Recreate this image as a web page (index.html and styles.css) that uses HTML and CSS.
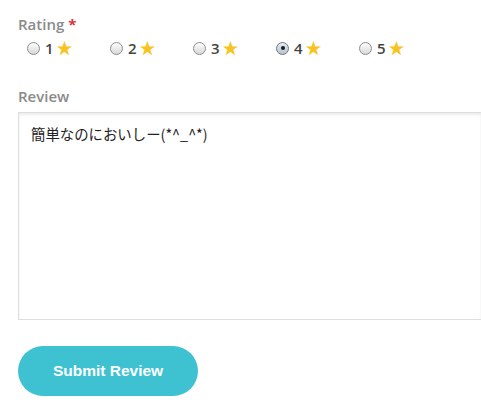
FILE: index.html
```html
<!DOCTYPE html>
<html>
<head>
<meta charset="utf-8">
<link rel="stylesheet" href="styles.css">
</head>
<body>
<form class="review-form">
  <div class="field">
    <div class="label">Rating <span class="req">*</span></div>
    <div class="ratings">
      <label class="rate"><span class="radio"></span><span class="num">1</span><span class="star">★</span></label>
      <label class="rate"><span class="radio"></span><span class="num">2</span><span class="star">★</span></label>
      <label class="rate"><span class="radio"></span><span class="num">3</span><span class="star">★</span></label>
      <label class="rate"><span class="radio checked"></span><span class="num">4</span><span class="star">★</span></label>
      <label class="rate"><span class="radio"></span><span class="num">5</span><span class="star">★</span></label>
    </div>
  </div>
  <div class="field review">
    <div class="label">Review</div>
    <div class="textarea">簡単なのにおいしー(*^_^*)</div>
  </div>
  <button type="button" class="submit">Submit Review</button>
</form>
</body>
</html>
```
FILE: styles.css
```css
html, body { margin: 0; padding: 0; background: #fff; }
body { font-family: "Open Sans", "Noto Sans CJK JP", sans-serif; overflow: hidden; }
.review-form { padding: 14px 0 0 18px; }
.label { font-size: 15px; color: #8a8a8a; line-height: 20px; font-weight: 600; }
.req { color: #d9343a; font-weight: 700; }
.ratings { display: flex; padding-left: 9px; margin-top: 5px; height: 18px; align-items: center; }
.rate { display: flex; align-items: center; width: 83px; }
.radio { width: 11px; height: 11px; border-radius: 50%; border: 1px solid #8d8d8d; background: linear-gradient(#fdfdfd, #d8d8d8); box-sizing: content-box; position: relative; }
.radio.checked { background: linear-gradient(#e6ebf2, #b8c3d0); border-color: #6f7780; }
.radio.checked::after { content: ""; position: absolute; left: 3.5px; top: 3.5px; width: 4px; height: 4px; border-radius: 50%; background: #1a1a1a; }
.num { font-size: 15px; color: #444; margin-left: 5px; font-weight: 600; }
.star { color: #f8c31d; font-size: 16px; margin-left: 3px; line-height: 1; }
.review { margin-top: 29px; }
.textarea { margin-top: 6px; height: 184px; border: 1px solid #dedede; border-right: none; box-shadow: inset 0 2px 3px rgba(0,0,0,0.08); padding: 11px 12px; font-size: 14.4px; color: #222; font-family: "Noto Sans CJK JP", sans-serif; line-height: 20px; }
.submit { display: block; margin-top: 26px; width: 180px; height: 50px; border-radius: 25px; border: none; background: #3ec2d1; color: #fff; font-family: "Liberation Sans", sans-serif; font-weight: 700; font-size: 15.5px; cursor: pointer; }
```
